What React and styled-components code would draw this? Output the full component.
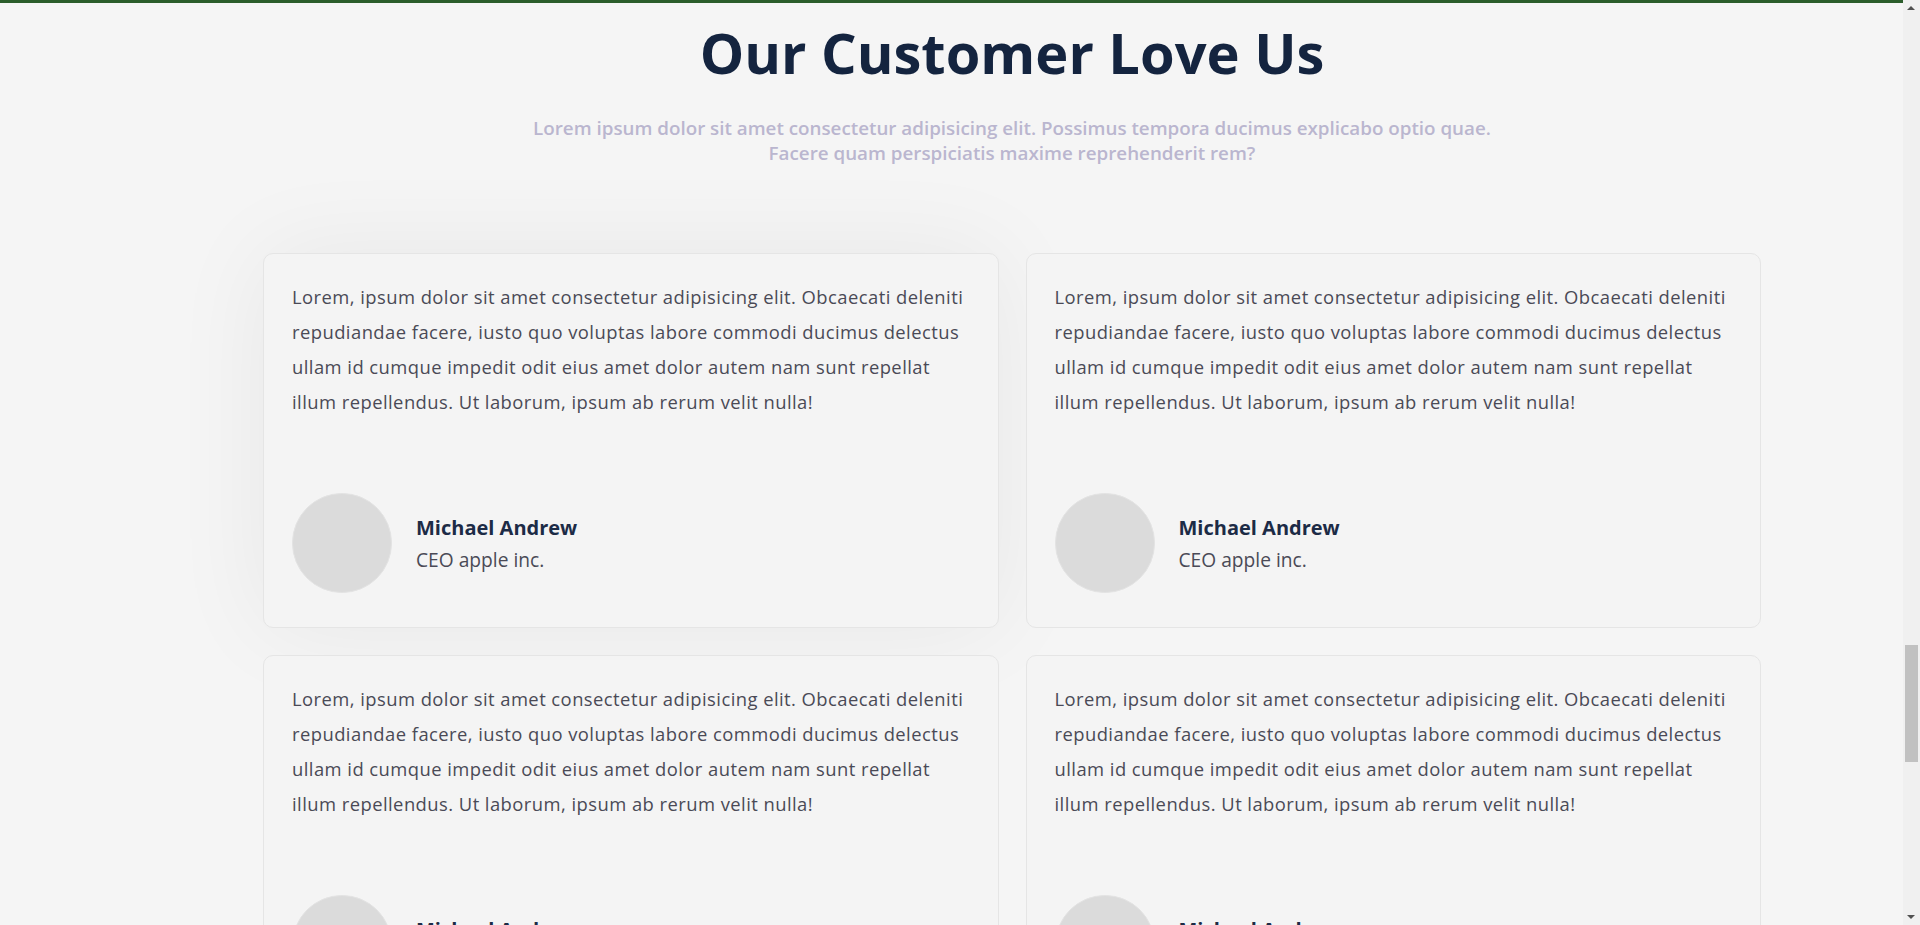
import styled, { createGlobalStyle } from 'styled-components';

const GlobalStyle = createGlobalStyle`
  * {
    box-sizing: border-box;
  }
  body {
    margin: 0;
    background-color: #f5f5f5;
    font-family: 'Open Sans', 'Noto Sans', sans-serif;
  }
`;

const TopBar = styled.div`
  height: 3px;
  background-color: #2b5d2b;
`;

const Section = styled.section`
  width: 1498px;
  margin-left: 263px;
  padding-top: 11px;
  padding-bottom: 60px;
`;

const Heading = styled.div`
  display: flex;
  flex-direction: column;
  align-items: center;
  text-align: center;
`;

const Title = styled.h2`
  margin: 0;
  font-size: 56px;
  font-weight: 700;
  color: #14243f;
`;

const Subtitle = styled.p`
  margin: 26px 0 0;
  max-width: 1000px;
  font-size: 18.8px;
  line-height: 24.5px;
  font-weight: 600;
  color: #bab6cf;
`;

const Grid = styled.div`
  display: grid;
  grid-template-columns: 1fr 1fr;
  column-gap: 27px;
  row-gap: 27px;
  margin-top: 88px;
`;

const Card = styled.div`
  background-color: #f4f4f4;
  border: 1px solid #e5e5e5;
  border-radius: 10px;
  padding: 25px 28px 34px;
  box-shadow: ${props =>
    props.$active ? '0 0 100px rgba(0, 0, 0, 0.06)' : 'none'};
`;

const Quote = styled.p`
  margin: 0 0 74px;
  font-size: 18.4px;
  line-height: 35px;
  letter-spacing: 0.45px;
  font-weight: 500;
  color: #4a4a56;
`;

const Author = styled.div`
  display: flex;
  align-items: center;
  gap: 24px;
`;

const Avatar = styled.div`
  width: 100px;
  height: 100px;
  border-radius: 50%;
  background-color: #dbdbdb;
  border: 1px solid #e3e3e3;
  flex-shrink: 0;
`;

const Name = styled.h4`
  margin: 0 0 5px;
  font-size: 20px;
  font-weight: 700;
  color: #1c2b46;
`;

const Role = styled.p`
  margin: 0;
  font-size: 19.2px;
  font-weight: 500;
  color: #4a4a56;
`;

/* the browser's scrollbar, as the reference shows it */
const ScrollTrack = styled.div`
  position: fixed;
  top: 0;
  right: 0;
  width: 17px;
  height: 100vh;
  background-color: #f0f0f0;
`;

const ScrollArrow = styled.div`
  position: absolute;
  left: 4px;
  ${props => (props.$down ? 'bottom: 6px;' : 'top: 6px;')}
  width: 0;
  height: 0;
  border-left: 4.5px solid transparent;
  border-right: 4.5px solid transparent;
  ${props =>
    props.$down
      ? 'border-top: 4.5px solid #505050;'
      : 'border-bottom: 4.5px solid #505050;'}
`;

const ScrollThumb = styled.div`
  position: absolute;
  left: 2px;
  top: 645px;
  width: 13px;
  height: 117px;
  background-color: #c1c1c1;
`;

const text =
  'Lorem, ipsum dolor sit amet consectetur adipisicing elit. Obcaecati deleniti repudiandae facere, iusto quo voluptas labore commodi ducimus delectus ullam id cumque impedit odit eius amet dolor autem nam sunt repellat illum repellendus. Ut laborum, ipsum ab rerum velit nulla!';

const reviews = [1, 2, 3, 4].map(id => ({
  id,
  text,
  name: 'Michael Andrew',
  role: 'CEO apple inc.',
}));

export default function App() {
  return (
    <>
      <GlobalStyle />
      <TopBar />
      <Section>
        <Heading>
          <Title>Our Customer Love Us</Title>
          <Subtitle>
            Lorem ipsum dolor sit amet consectetur adipisicing elit. Possimus
            tempora ducimus explicabo optio quae. Facere quam perspiciatis
            maxime reprehenderit rem?
          </Subtitle>
        </Heading>
        <Grid>
          {reviews.map((review, index) => (
            <Card key={review.id} $active={index === 0}>
              <Quote>{review.text}</Quote>
              <Author>
                <Avatar />
                <div>
                  <Name>{review.name}</Name>
                  <Role>{review.role}</Role>
                </div>
              </Author>
            </Card>
          ))}
        </Grid>
      </Section>
      <ScrollTrack>
        <ScrollArrow />
        <ScrollThumb />
        <ScrollArrow $down />
      </ScrollTrack>
    </>
  );
}
